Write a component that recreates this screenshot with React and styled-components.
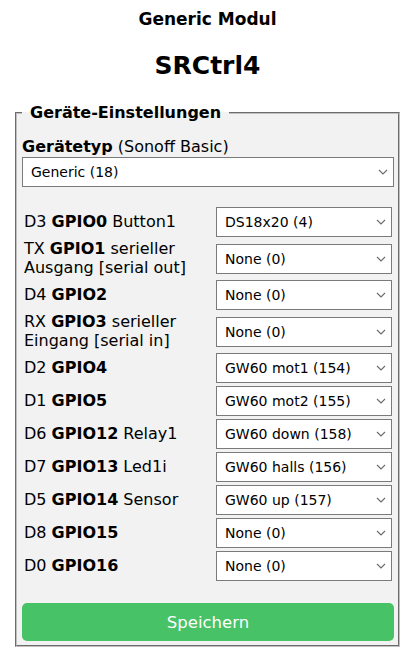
import React from "react";
import styled, { createGlobalStyle } from "styled-components";

const GlobalStyle = createGlobalStyle`
  body {
    margin: 0;
    background: #ffffff;
    font-family: "DejaVu Sans", Verdana, sans-serif;
    color: #000000;
  }
`;

const Page = styled.div`
  padding: 8px;
`;

const Container = styled.div`
  width: 385px;
  margin-left: 7px;
`;

const ModuleTitle = styled.h3`
  margin: 0;
  font-size: 17px;
  line-height: 22px;
  font-weight: bold;
  text-align: center;
`;

const DeviceName = styled.h2`
  margin: 21px 0 0;
  font-size: 25px;
  line-height: 30px;
  font-weight: bold;
  text-align: center;
`;

const Fieldset = styled.fieldset`
  margin: 22px 0 0;
  padding: 0 4px 4px 5px;
  border: 2px groove #c0c0c0;
  background: #f2f2f2;
  min-width: 0;
`;

const Legend = styled.legend`
  padding: 0 8px;
  margin-left: 0;
  font-size: 16px;
  line-height: 19px;
  font-weight: bold;
`;

const TypeLabel = styled.div`
  margin-top: 16px;
  font-size: 16px;
  line-height: 18.5px;
`;

const SelectWrap = styled.div`
  position: relative;
  width: 100%;
`;

const Select = styled.select`
  appearance: none;
  -webkit-appearance: none;
  display: block;
  width: 100%;
  height: 30px;
  margin: 0;
  padding: 0 24px 0 8px;
  border: 1px solid #7a7a7a;
  border-radius: 0;
  background: #ffffff;
  color: #000000;
  font-family: "DejaVu Sans", Verdana, sans-serif;
  font-size: 14px;
  outline: none;
`;

const Chevron = styled.svg`
  position: absolute;
  right: 6px;
  top: 50%;
  width: 10px;
  height: 6px;
  margin-top: -3px;
  pointer-events: none;
`;

const GpioGrid = styled.div`
  margin-top: 20.5px;
  padding: 0 2px;
  display: grid;
  grid-template-columns: 1fr 176px;
  column-gap: 3px;
  row-gap: 3px;
  align-items: center;
`;

const PinLabel = styled.div`
  font-size: 16px;
  line-height: 18.5px;
`;

const SaveButton = styled.button`
  display: block;
  width: 100%;
  height: 38px;
  margin-top: 22px;
  border: 0;
  border-radius: 5px;
  background: #47c266;
  color: #ffffff;
  font-family: "DejaVu Sans", Verdana, sans-serif;
  font-size: 16.5px;
  cursor: pointer;
`;

const pins = [
  { pin: "D3", gpio: "GPIO0", note: ["Button1"], value: "DS18x20 (4)" },
  { pin: "TX", gpio: "GPIO1", note: ["serieller", "Ausgang [serial out]"], value: "None (0)" },
  { pin: "D4", gpio: "GPIO2", note: [], value: "None (0)" },
  { pin: "RX", gpio: "GPIO3", note: ["serieller", "Eingang [serial in]"], value: "None (0)" },
  { pin: "D2", gpio: "GPIO4", note: [], value: "GW60 mot1 (154)" },
  { pin: "D1", gpio: "GPIO5", note: [], value: "GW60 mot2 (155)" },
  { pin: "D6", gpio: "GPIO12", note: ["Relay1"], value: "GW60 down (158)" },
  { pin: "D7", gpio: "GPIO13", note: ["Led1i"], value: "GW60 halls (156)" },
  { pin: "D5", gpio: "GPIO14", note: ["Sensor"], value: "GW60 up (157)" },
  { pin: "D8", gpio: "GPIO15", note: [], value: "None (0)" },
  { pin: "D0", gpio: "GPIO16", note: [], value: "None (0)" },
];

const Dropdown = ({ value }) => (
  <SelectWrap>
    <Select defaultValue={value}>
      <option value={value}>{value}</option>
    </Select>
    <Chevron viewBox="0 0 10 6">
      <path d="M1 1 L5 5 L9 1" fill="none" stroke="#6a6a6a" strokeWidth="1.1" />
    </Chevron>
  </SelectWrap>
);

const App = () => {
  return (
    <Page>
      <GlobalStyle />
      <Container>
        <ModuleTitle>Generic Modul</ModuleTitle>
        <DeviceName>SRCtrl4</DeviceName>
        <Fieldset>
          <Legend>Geräte-Einstellungen</Legend>
          <TypeLabel>
            <b>Gerätetyp</b> (Sonoff Basic)
          </TypeLabel>
          <Dropdown value="Generic (18)" />
          <GpioGrid>
            {pins.map((p) => (
              <React.Fragment key={p.gpio}>
                <PinLabel>
                  {p.pin} <b>{p.gpio}</b>
                  {p.note[0] ? ` ${p.note[0]}` : ""}
                  {p.note[1] && (
                    <>
                      <br />
                      {p.note[1]}
                    </>
                  )}
                </PinLabel>
                <Dropdown value={p.value} />
              </React.Fragment>
            ))}
          </GpioGrid>
          <SaveButton>Speichern</SaveButton>
        </Fieldset>
      </Container>
    </Page>
  );
};

export default App;
